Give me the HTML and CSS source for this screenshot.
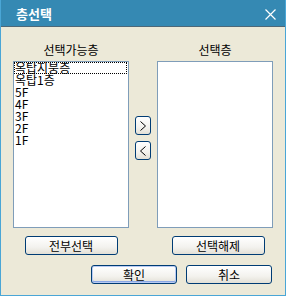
FILE: index.html
```html
<!DOCTYPE html>
<html lang="ko">
  <head>
    <meta charset="UTF-8" />
    <meta name="viewport" content="width=device-width, initial-scale=1.0" />
    <title>층선택</title>
    <link rel="stylesheet" href="styles.css">
  </head>
  <body>
    <div class="window">
      <div class="titlebar">
        <span class="title">층선택</span>
        <svg class="close" width="11" height="11" viewBox="0 0 11 11">
          <path d="M0.5 0.5 L10.5 10.5 M10.5 0.5 L0.5 10.5" stroke="#fff" stroke-width="1.2" fill="none" />
        </svg>
      </div>
      <div class="content">
        <div class="lists">
          <div class="column">
            <div class="label">선택가능층</div>
            <div class="listbox">
              <div class="item focus">옥탑지붕층</div>
              <div class="item">옥탑1층</div>
              <div class="item">5F</div>
              <div class="item">4F</div>
              <div class="item">3F</div>
              <div class="item">2F</div>
              <div class="item">1F</div>
            </div>
            <button class="btn wide">전부선택</button>
          </div>
          <div class="arrows">
            <button class="btn arrow">
              <svg width="6" height="10" viewBox="0 0 6 10"><polyline points="0.5,0.5 5.5,5 0.5,9.5" fill="none" stroke="#000" stroke-width="1" /></svg>
            </button>
            <button class="btn arrow">
              <svg width="6" height="10" viewBox="0 0 6 10"><polyline points="5.5,0.5 0.5,5 5.5,9.5" fill="none" stroke="#000" stroke-width="1" /></svg>
            </button>
          </div>
          <div class="column">
            <div class="label">선택층</div>
            <div class="listbox"></div>
            <button class="btn wide shift">선택해제</button>
          </div>
        </div>
        <div class="actions">
          <button class="btn action default">확인</button>
          <button class="btn action">취소</button>
        </div>
      </div>
    </div>
  </body>
</html>
```

FILE: styles.css
```css
* {
  padding: 0;
  margin: 0;
  box-sizing: border-box;
  font-family: "Noto Sans CJK KR", "Noto Sans", sans-serif;
}
body {
  background-color: #ece9d8;
}
.window {
  width: 286px;
  height: 296px;
  background-color: #ece9d8;
  border-left: 1px solid #4aa6d6;
  border-right: 1px solid #4aa6d6;
  border-bottom: 1px solid #4aa6d6;
  display: flex;
  flex-direction: column;
}
.titlebar {
  height: 27px;
  background-color: #3589b3;
  border-bottom: 1px solid #4d6878;
  display: flex;
  align-items: center;
  justify-content: space-between;
  padding: 0 9px 0 15px;
}
.title {
  color: #fff;
  font-weight: bold;
  font-size: 13px;
  line-height: 13px;
}
.close {
  margin-top: 3px;
}
.content {
  display: flex;
  flex-direction: column;
  padding: 17px 12px 0 12px;
}
.lists {
  display: flex;
  gap: 6px;
}
.column {
  width: 116px;
  display: flex;
  flex-direction: column;
  align-items: center;
}
.label {
  font-size: 12px;
  line-height: 12px;
  height: 12px;
  margin-bottom: 5px;
}
.listbox {
  width: 116px;
  height: 167px;
  background-color: #fff;
  border: 1px solid #7f9db9;
  padding: 0 0 0 0;
}
.item {
  font-size: 12px;
  line-height: 12px;
  height: 12px;
  padding-left: 1px;
  white-space: nowrap;
}
.focus {
  outline: 1px dotted #000;
  outline-offset: -1px;
  margin-right: 1px;
}
.btn {
  border: 1px solid #003c74;
  border-radius: 3px;
  background: linear-gradient(#ffffff, #f3f2ee 60%, #e3e0d6);
  color: #000;
  font-size: 12px;
  display: flex;
  align-items: center;
  justify-content: center;
}
.wide {
  width: 93px;
  height: 19px;
  margin-top: 8px;
}
.shift {
  position: relative;
  left: 3px;
}
.arrows {
  width: 16px;
  display: flex;
  flex-direction: column;
  gap: 6px;
  padding-top: 72px;
}
.arrow {
  width: 16px;
  height: 19px;
}
.actions {
  display: flex;
  justify-content: flex-end;
  gap: 9px;
  margin-top: 10px;
  padding-right: 1px;
}
.action {
  width: 86px;
  height: 19px;
}
.default {
  box-shadow: inset 0 0 0 1px #b9cbf3, inset 0 -1px 0 1px #8aa7e4;
}
```
